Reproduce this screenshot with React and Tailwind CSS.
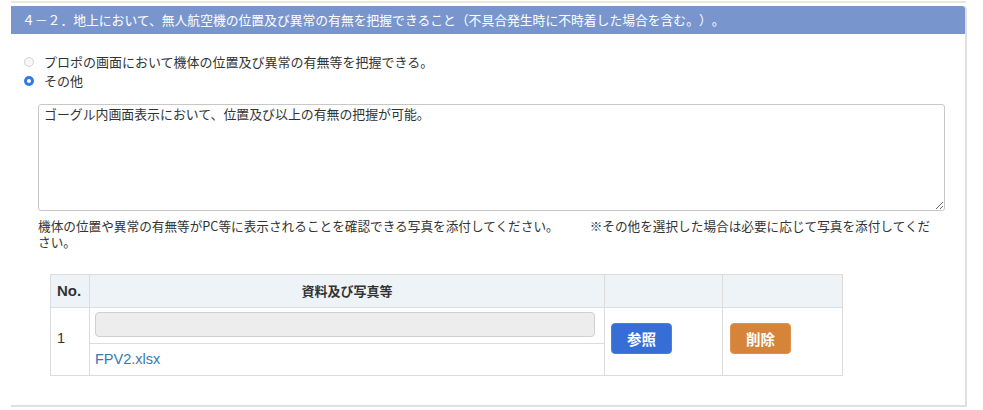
import React from 'react';

const jp = "font-['Noto_Sans_CJK_JP','Noto_Sans',sans-serif] [text-spacing-trim:space-all]";

const Radio = ({ checked }) =>
  checked ? (
    <span className="w-[10px] h-[10px] rounded-full bg-[#2f7ae5] flex items-center justify-center">
      <span className="w-[4px] h-[4px] rounded-full bg-white" />
    </span>
  ) : (
    <span className="w-[10px] h-[10px] rounded-full border border-[#d4d4d4] bg-[#f7f7f7]" />
  );

export default function App() {
  return (
    <div className={`w-[983px] h-[410px] bg-white overflow-hidden text-[#333] ${jp}`}>
      {/* end of previous panel */}
      <div className="ml-[11px] w-[955px] h-[3px] border-b-2 border-[#e6e6e6]" />

      <div className="ml-[11px] mt-[3px] w-[956px] h-[401px] border-r-2 border-b-2 border-[#e0e0e0] rounded-tr-[4px]">
        <div className="h-[28px] bg-[#7896cd] rounded-tr-[3px] flex items-center pl-[11px] text-white text-[12.8px]">
          ４－２．地上において、無人航空機の位置及び異常の有無を把握できること（不具合発生時に不時着した場合を含む。）。
        </div>

        <div className="pt-[18px] pl-[13px] text-[13px]">
          <label className="h-[19px] flex items-center gap-[10px]">
            <Radio />
            <span>プロポの画面において機体の位置及び異常の有無等を把握できる。</span>
          </label>
          <label className="h-[19px] flex items-center gap-[10px]">
            <Radio checked />
            <span>その他</span>
          </label>
        </div>

        <div className="ml-[27px] mt-[14px] w-[907px]">
          <textarea
            className="block w-full h-[107px] border border-[#c8c8c8] rounded-[3px] px-[5px] py-[1px] text-[12.9px] leading-[16px] text-[#333] outline-none resize-y [text-spacing-trim:space-all]"
            defaultValue="ゴーグル内画面表示において、位置及び以上の有無の把握が可能。"
          />
          <p className="mt-[7px] w-[898px] text-[12.65px] leading-[16px]">
            機体の位置や異常の有無等がPC等に表示されることを確認できる写真を添付してください。　　&nbsp;&nbsp;※その他を選択した場合は必要に応じて写真を添付してください。
          </p>
        </div>

        <table className="ml-[39px] mt-[24px] w-[793px] border-collapse text-[12.6px]">
          <thead>
            <tr className="h-[33px] bg-[#eef3f8]">
              <th className="w-[39px] border border-[#dcdcdc] text-left pl-[6px] font-bold font-['Liberation_Sans',sans-serif] text-[15px]">No.</th>
              <th className="w-[515px] border border-[#dcdcdc] font-bold text-[13px]">資料及び写真等</th>
              <th className="w-[118px] border border-[#dcdcdc]" />
              <th className="border border-[#dcdcdc]" />
            </tr>
          </thead>
          <tbody>
            <tr>
              <td className="border border-[#dcdcdc] pl-[6px] align-middle font-['Liberation_Sans',sans-serif] text-[14.5px] pb-[6px]">1</td>
              <td className="border border-[#dcdcdc] p-0">
                <div className="h-[36px] pt-[4px] pl-[5px] border-b border-[#dcdcdc]">
                  <div className="w-[500px] h-[25px] rounded-[4px] border border-[#cfcfcf] bg-[#ededed]" />
                </div>
                <div className="h-[31px] pl-[5px] flex items-center">
                  <a className="text-[#337ab7] font-['Liberation_Sans',sans-serif] text-[14.5px]">FPV2.xlsx</a>
                </div>
              </td>
              <td className="border border-[#dcdcdc] pl-[6px] pb-[6px] align-middle">
                <button className="w-[61px] h-[31px] rounded-[4px] bg-[#376dd7] border border-[#4f7fdc] text-white font-bold text-[14.5px]">
                  参照
                </button>
              </td>
              <td className="border border-[#dcdcdc] pl-[7px] pb-[6px] align-middle">
                <button className="w-[61px] h-[31px] rounded-[4px] bg-[#d6843a] border border-[#dc9452] text-white font-bold text-[14.5px]">
                  削除
                </button>
              </td>
            </tr>
          </tbody>
        </table>
      </div>
    </div>
  );
}
